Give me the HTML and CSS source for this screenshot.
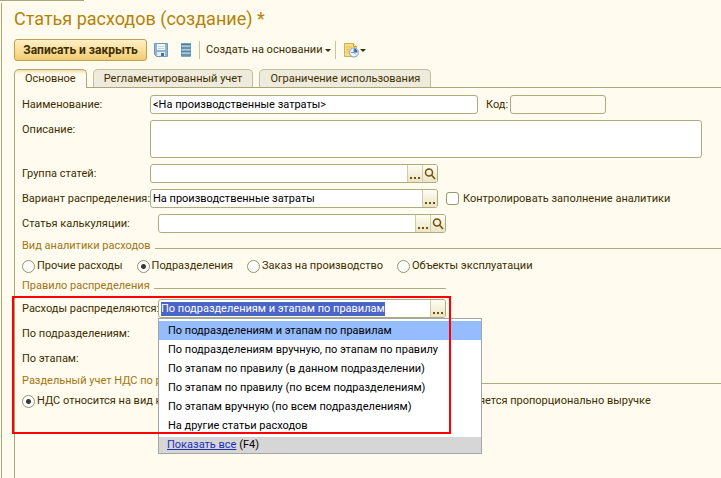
FILE: index.html
```html
<!DOCTYPE html>
<html lang="ru">
<head>
<meta charset="utf-8">
<title>Статья расходов (создание)</title>
<link rel="stylesheet" href="styles.css">
</head>
<body>
<div class="window-edge"></div>
<main class="window">
  <h1 class="title">Статья расходов (создание) *</h1>

  <div class="toolbar">
    <button class="primary" type="button">Записать и закрыть</button>
    <button class="tool tool-save" type="button" aria-label="Записать">
      <svg width="16" height="16" viewBox="0 0 16 16">
        <path d="M1.500 1.500h13v13h-11l-2-2z" fill="#8fb4d0" stroke="#6f9abb"/>
        <path d="M4 2h8v6H4z" fill="#f4f8fb"/>
        <path d="M5 4.500h6M5 6.500h6" stroke="#c3d2dd"/>
        <path d="M4 10h8v4H4z" fill="#e6ebee"/>
        <path d="M8 11h3v3H8z" fill="#466f91"/>
      </svg>
    </button>
    <button class="tool tool-list" type="button" aria-label="Список">
      <svg width="12" height="16" viewBox="0 0 12 16">
        <path d="M1.500 1.500h9v13h-9z" fill="#a9c8dc" stroke="#7fa8c4"/>
        <path d="M1 2.500h10M1 6h10M1 9.500h10M1 13h10" stroke="#55819f" stroke-width="1.500"/>
      </svg>
    </button>
    <span class="separator"></span>
    <button class="tool tool-create" type="button">Создать на основании<span class="caret"></span></button>
    <span class="separator"></span>
    <button class="tool tool-schedule" type="button" aria-label="Отчеты">
      <svg width="17" height="16" viewBox="0 0 17 16">
        <path d="M1.500 1.500h9l3 3v10h-12z" fill="#f7dc81" stroke="#d0b054"/>
        <path d="M10.500 1.500v3h3" fill="#fff3bf" stroke="#c5a044"/>
        <path d="M3 5h6M3 7.500h4M3 10h3" stroke="#dfc163"/>
        <circle cx="11" cy="10.500" r="4.500" fill="#eef7ff" stroke="#7f9fc6"/>
        <path d="M11 10.500V6.500a4 4 0 0 1 3.500 4z" fill="#3565ae"/>
        <path d="M11 7.500v3h-3M11 10.500l2 2" fill="none" stroke="#7296c2"/>
      </svg>
      <span class="caret"></span>
    </button>
  </div>

  <div class="tabs" role="tablist">
    <button class="tab active" type="button" role="tab" aria-selected="true">Основное</button>
    <button class="tab" type="button" role="tab" aria-selected="false">Регламентированный учет</button>
    <button class="tab" type="button" role="tab" aria-selected="false">Ограничение использования</button>
  </div>

  <form class="panel">
    <div class="row">
      <label class="name" for="name">Наименование:</label>
      <input class="field field-name" id="name" type="text" value="&lt;На производственные затраты&gt;">
      <label class="code-label" for="code">Код:</label>
      <input class="field field-code" id="code" type="text">
    </div>
    <div class="row row-top">
      <label class="name" for="description">Описание:</label>
      <textarea class="field field-description" id="description"></textarea>
    </div>
    <div class="row">
      <label class="name" for="group">Группа статей:</label>
      <div class="field combo">
        <input id="group" type="text">
        <button class="pick" type="button" aria-label="Выбрать группу"><span class="dots"></span></button>
        <button class="pick" type="button" aria-label="Открыть группу"><svg width="12" height="12" viewBox="0 0 12 12"><circle cx="5" cy="4.500" r="3.500"/><path d="M7.500 7l3.500 4"/></svg></button>
      </div>
    </div>
    <div class="row">
      <label class="name" for="variant">Вариант распределения:</label>
      <div class="field combo">
        <input id="variant" type="text" value="На производственные затраты">
        <button class="pick" type="button" aria-label="Выбрать вариант"><span class="dots"></span></button>
      </div>
      <label class="choice check"><input type="checkbox">Контролировать заполнение аналитики</label>
    </div>
    <div class="row">
      <label class="name wide" for="costing">Статья калькуляции:</label>
      <div class="field combo">
        <input id="costing" type="text">
        <button class="pick" type="button" aria-label="Выбрать статью"><span class="dots"></span></button>
        <button class="pick" type="button" aria-label="Открыть статью"><svg width="12" height="12" viewBox="0 0 12 12"><circle cx="5" cy="4.500" r="3.500"/><path d="M7.500 7l3.500 4"/></svg></button>
      </div>
    </div>

    <h2 class="section"><span>Вид аналитики расходов</span></h2>
    <div class="choices">
      <label class="choice"><input type="radio" name="kind">Прочие расходы</label>
      <label class="choice"><input type="radio" name="kind" checked>Подразделения</label>
      <label class="choice"><input type="radio" name="kind">Заказ на производство</label>
      <label class="choice"><input type="radio" name="kind">Объекты эксплуатации</label>
    </div>

    <h2 class="section short"><span>Правило распределения</span></h2>
    <div class="rules">
      <div class="row">
        <label class="name wide" for="rule">Расходы распределяются:</label>
        <div class="field combo open">
          <input id="rule" type="text" value="По подразделениям и этапам по правилам">
          <button class="pick" type="button" aria-label="Выбрать правило"><span class="dots"></span></button>
          <div class="menu">
            <ul class="options" role="listbox">
              <li class="current" role="option" aria-selected="true">По подразделениям и этапам по правилам</li>
              <li role="option">По подразделениям вручную, по этапам по правилу</li>
              <li role="option">По этапам по правилу (в данном подразделении)</li>
              <li role="option">По этапам по правилу (по всем подразделениям)</li>
              <li role="option">По этапам вручную (по всем подразделениям)</li>
              <li role="option">На другие статьи расходов</li>
            </ul>
            <div class="menu-footer"><a href="#all">Показать все</a> (F4)</div>
          </div>
        </div>
      </div>
      <div class="row"><span class="name">По подразделениям:</span></div>
      <div class="row"><span class="name">По этапам:</span></div>
      <h2 class="section"><span>Раздельный учет НДС по р</span></h2>
      <div class="choices split">
        <label class="choice"><input type="radio" name="vat" checked>НДС относится на вид н</label>
        <span>яется пропорционально выручке</span>
      </div>
      <div class="highlight"></div>
    </div>
  </form>
</main>
<script src="form.js"></script>
</body>
</html>
```

FILE: styles.css
```css
* {
  box-sizing: border-box;
}

body {
  margin: 0;
  min-height: 100vh;
  display: flex;
  flex-direction: column;
  background: #fffbee;
  color: #3d2e00;
  font: 11px/14px Roboto, "Liberation Sans", sans-serif;
  overflow: hidden;
}

button,
input,
textarea {
  margin: 0;
  padding: 0;
  border: 0;
  background: none;
  color: inherit;
  font: inherit;
  outline: 0;
}

.window-edge {
  width: 84px;
  height: 1px;
  background: #aaa67c;
}

.window {
  flex: 1;
  display: flex;
  flex-direction: column;
  margin: 2px 0 0 1px;
  padding: 5px 0 0 12px;
  border-left: 1px solid #aaa67c;
}

.title {
  margin: 0;
  color: #b48208;
  font-size: 18px;
  font-weight: 400;
  line-height: 22px;
}

.toolbar {
  display: flex;
  align-items: center;
  height: 22px;
  margin-top: 9px;
}

.primary {
  height: 22px;
  padding: 0 6px;
  border: 1px solid #c2a044;
  border-radius: 3px;
  background: linear-gradient(#fdf0c8, #f8dc94 60%, #efcb74);
  font-size: 12px;
  font-weight: 700;
  min-width: 133px;
}

.tool {
  display: flex;
  align-items: center;
}

.tool-save {
  margin-left: 6px;
}

.tool-list {
  margin: 0 7px 0 11px;
}

.tool-create {
  margin: 0 4px 0 6px;
}

.tool-create .caret {
  margin-left: 2px;
}

.tool-schedule {
  margin-left: 7px;
}

.separator {
  width: 1px;
  height: 18px;
  background: #c9c39a;
}

.caret {
  border: 3px solid transparent;
  border-top-color: #3d2e00;
  border-bottom: 0;
}

.tabs {
  display: flex;
  align-items: flex-end;
  gap: 6px;
  margin-top: 8px;
}

.tab {
  height: 18px;
  padding: 0 10px;
  border: 1px solid #c3bf9c;
  border-bottom: 0;
  border-radius: 5px 5px 0 0;
  background: #efebdc;
  white-space: nowrap;
}

.tab.active {
  position: relative;
  z-index: 1;
  height: 19px;
  margin-bottom: -1px;
  border-color: #aaa67c;
  background: linear-gradient(#f8dda0, #fffbee 4px);
}

.panel {
  flex: 1;
  display: flex;
  flex-direction: column;
  gap: 6px;
  padding: 7px 0 0 7px;
  border: solid #aaa67c;
  border-width: 1px 0 0 1px;
}

.row,
.choices {
  display: flex;
  align-items: center;
}

.row-top {
  align-items: flex-start;
}

.name {
  flex: none;
  width: 128px;
  line-height: 19px;
  white-space: nowrap;
}

.name.wide {
  width: 136px;
}

.field {
  height: 19px;
  border: 1px solid #b0ab7f;
  border-radius: 3px;
  background: #fff;
  color: #000;
}

input.field {
  padding: 0 2px;
}

.field-name {
  flex: 0 1 328px;
  min-width: 0;
}

.code-label {
  margin: 0 2px 0 8px;
}

.field-code {
  flex: 0 1 96px;
  min-width: 0;
  background: transparent;
}

.field-description {
  flex: 0 1 552px;
  height: 38px;
  resize: none;
}

.combo {
  position: relative;
  display: flex;
  flex: 0 1 288px;
}

.combo input {
  flex: 1;
  min-width: 0;
  padding: 0 2px;
}

.combo.open input::selection {
  background: #4a64c8;
  color: #fff;
}

.pick {
  display: flex;
  align-items: center;
  justify-content: center;
  width: 15px;
  border-left: 1px solid #d2cca6;
  border-radius: 0 2px 2px 0;
  background: linear-gradient(#fffdf2, #ebe4c7);
}

.pick svg {
  fill: none;
  stroke: #70510b;
  stroke-width: 1.5;
}

.dots {
  width: 10px;
  height: 2px;
  margin-top: 8px;
  background: repeating-linear-gradient(90deg, #70510b 0 2px, transparent 2px 4px);
}

.choice {
  display: flex;
  align-items: center;
  white-space: nowrap;
}

.choice input {
  flex: none;
  width: 13px;
  height: 13px;
  margin-right: 2px;
  appearance: none;
  border: 1px solid #99946c;
  background: #fff;
}

.choice input[type="radio"] {
  border-radius: 50%;
}

.choice input:checked {
  background: radial-gradient(circle, #3a3a3a 2px, #fff 3px);
}

.check {
  margin-left: 8px;
}

.check input {
  margin-right: 4px;
  border-radius: 3px;
}

.section {
  display: flex;
  align-items: center;
  gap: 4px;
  height: 14px;
  margin: 0;
  color: #a27512;
  font-size: 11px;
  font-weight: 400;
  white-space: nowrap;
}

.section::after {
  content: "";
  flex: 1;
  height: 1px;
  margin-top: 4px;
  background: #b0ab7f;
}

.section.short {
  max-width: 424px;
}

.choices {
  gap: 14px;
  height: 14px;
}

.rules {
  position: relative;
  display: flex;
  flex-direction: column;
  gap: 6px;
}

.split .choice {
  width: 445px;
}

.split {
  gap: 12px;
}

.menu {
  position: absolute;
  z-index: 1;
  top: 18px;
  left: -1px;
  width: 324px;
  border: 1px solid #a5a5a5;
  background: #fff;
}

.options {
  margin: 0;
  padding: 2px 0;
  list-style: none;
}

.options li {
  padding-left: 9px;
  line-height: 19px;
}

.options .current {
  background: #94bcff;
}

.menu-footer {
  padding: 0 8px;
  background: #d6d6d6;
  line-height: 16px;
}

.menu-footer a {
  color: #1c2fb8;
}

.highlight {
  position: absolute;
  z-index: 2;
  top: -3px;
  left: -10px;
  width: 439px;
  height: 138px;
  border: 2px solid #f00;
  pointer-events: none;
}
```

FILE: form.js
```js
// The rule field is being edited: its whole value is selected.
const rule = document.getElementById("rule");
rule.focus();
rule.select();
```
